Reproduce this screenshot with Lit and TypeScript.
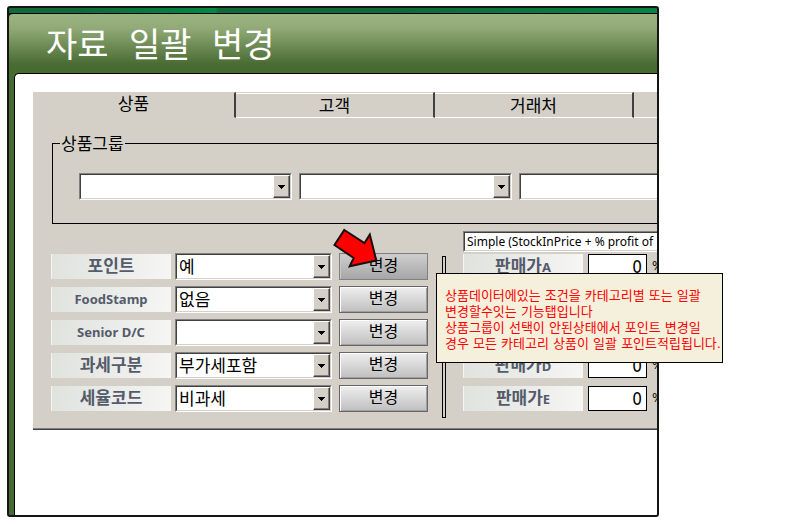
import { LitElement, html, css } from "lit";
import { customElement, property } from "lit/decorators.js";

@customElement("combo-box")
class ComboBox extends LitElement {
  @property() label = "";
  @property() value = "";
  @property({ type: Boolean }) plain = false;

  static styles = css`
    :host {
      display: grid;
      box-sizing: border-box;
      height: 27px;
      border: 1px solid;
      border-color: #808080 #fff #fff #808080;
      font-family: "DejaVu Sans Condensed", "Noto Sans CJK KR", sans-serif;
      font-size: 17px;
    }
    .field {
      display: grid;
      grid-template-columns: 1fr 17px;
      border: 1px solid;
      border-color: #404040 #d4d0c8 #d4d0c8 #404040;
      background: #fff;
      min-width: 0;
    }
    .field.plain {
      grid-template-columns: 1fr;
    }
    select {
      appearance: none;
      width: 100%;
      min-width: 0;
      height: 100%;
      margin: 0;
      padding: 0 0 0 2px;
      border: 0;
      border-radius: 0;
      outline: 0;
      background: #fff;
      color: #000;
      font: inherit;
    }
    .arrow {
      display: grid;
      place-items: center;
      box-sizing: border-box;
      border: 1px solid;
      border-color: #fff #404040 #404040 #fff;
      box-shadow: inset -1px -1px #808080;
      background: #d4d0c8;
      pointer-events: none;
    }
  `;

  render() {
    return html`
      <div class="field ${this.plain ? "plain" : ""}">
        <select aria-label=${this.label}>
          <option>${this.value}</option>
        </select>
        ${this.plain
          ? null
          : html`<span class="arrow">
              <svg width="7" height="4" viewBox="0 0 7 4" shape-rendering="crispEdges">
                <path d="M0 0H7V1H6V2H5V3H4V4H3V3H2V2H1V1H0Z" />
              </svg>
            </span>`}
      </div>
    `;
  }
}

@customElement("app-root")
class AppRoot extends LitElement {
  static styles = css`
    :host {
      display: block;
      position: relative;
      overflow: hidden;
      background: #fff;
      color: #000;
      font-family: "DejaVu Sans Condensed", "Noto Sans CJK KR", sans-serif;
      font-size: 17px;
    }
    .frame {
      margin: 6px 141px 8px 7px;
      border: 2px solid #151613;
      border-radius: 3px;
      overflow: hidden;
      background: #151613;
    }
    .strip {
      height: 5px;
      background: linear-gradient(90deg, #0f6b39 0, #0f6b39 70px, #008a43 206px, #0f6b39 210px, #0f6b39 60%, #058443 100%);
    }
    .window {
      border-top: 1px solid #000;
      border-radius: 4px 0 0 0;
      padding-left: 5px;
      background: linear-gradient(#9ab381 0, #91aa77 14px, #4a6c33 50px, #466a30 56px);
    }
    h1 {
      margin: 0;
      padding-left: 32px;
      height: 59px;
      line-height: 62px;
      color: #fff;
      font-family: "DejaVu Sans Mono", "Noto Sans CJK KR", monospace;
      font-size: 34px;
      font-weight: 400;
      white-space: nowrap;
    }
    .body {
      border: 1px solid #000;
      border-width: 1px 0 0 1px;
      border-radius: 5px 0 0 0;
      padding: 18px 0 85px 18px;
      background: #fff;
    }
    .panel {
      background: #d4d0c8;
      border-bottom: 1px solid #404040;
      box-shadow: inset 0 -1px #808080;
      padding-bottom: 11px;
      overflow: hidden;
    }
    .tabs {
      display: flex;
    }
    .tab {
      flex: none;
      box-sizing: border-box;
      width: 199px;
      height: 26px;
      padding: 2px 0 0;
      border: 0;
      border-top: 1px solid #d4d0c8;
      border-bottom: 1px solid #fff;
      border-right: 2px solid #404040;
      box-shadow: inset 0 1px #fff;
      background: #d4d0c8;
      color: #000;
      font: inherit;
      line-height: 20px;
    }
    .tab.active {
      width: 203px;
      padding: 0 0 2px;
      border-bottom-color: #d4d0c8;
      box-shadow: none;
    }
    .tab.last {
      box-shadow: none;
    }
    fieldset {
      display: flex;
      gap: 7px;
      margin: 16px -20px 0 19px;
      padding: 21px 0 23px 26px;
      border: 1px solid #000;
      min-width: 0;
    }
    legend {
      margin-left: -19px;
      padding: 0 1px;
      height: 18px;
      line-height: 21px;
    }
    .group {
      flex: none;
      width: 213px;
    }
    .settings {
      display: flex;
      align-items: flex-start;
      margin: 7px 0 0 18px;
    }
    .options,
    .prices {
      flex: none;
      display: grid;
      row-gap: 6px;
    }
    .options {
      grid-template-columns: 120px 157px 92px;
      column-gap: 4px;
      padding-top: 22px;
    }
    .change {
      box-sizing: border-box;
      width: 89px;
      height: 27px;
      margin-left: 3px;
      padding: 0 0 2px;
      border: 1px solid #66666a;
      box-shadow: inset 1px 1px #fff, inset -1px -1px #a0a0a0;
      background: linear-gradient(#efefef, #bfbfbf);
      color: #000;
      font: inherit;
      font-size: 16px;
      line-height: 22px;
    }
    .change.hot {
      border-color: #808084;
      box-shadow: inset 1px 1px #c8c8c8;
      background: linear-gradient(#cfcfcf, #a6a6a6);
    }
    .caption {
      align-self: center;
      height: 25px;
      line-height: 25px;
      text-align: center;
      white-space: nowrap;
      font-weight: 700;
      color: #555b6b;
      background: linear-gradient(100deg, #dfe2dd, #f6f6f5);
      box-shadow: inset 1px 0 #f4f5f3;
    }
    .latin {
      font-family: "Noto Sans", sans-serif;
      font-size: 13px;
    }
    .divider {
      flex: none;
      box-sizing: border-box;
      width: 4px;
      height: 162px;
      margin: 25px 17px 0 14px;
      border: 1px solid #000;
    }
    .formula {
      width: 260px;
      height: 21px;
      margin-bottom: 1px;
      font-family: "Noto Sans", sans-serif;
      font-size: 12px;
    }
    .prices {
      grid-template-columns: 120px 59px auto;
      column-gap: 5px;
    }
    .price {
      align-self: center;
      box-sizing: border-box;
      width: 59px;
      height: 25px;
      padding: 0 4px;
      border: 1px solid #000;
      border-radius: 0;
      background: #fff;
      font: inherit;
      text-align: right;
    }
    .unit {
      height: 27px;
      line-height: 25px;
      font-size: 13px;
    }
    .pointer {
      position: absolute;
      left: 332px;
      top: 226px;
    }
    .tooltip {
      position: absolute;
      left: 436px;
      top: 273px;
      box-sizing: border-box;
      width: 287px;
      height: 90px;
      padding: 14px 0 0 8px;
      border: 1px solid #000;
      background: #f5f0dc;
      color: #f00;
      font-family: "DejaVu Sans", "Noto Sans CJK KR", sans-serif;
      font-size: 13px;
      line-height: 16px;
      white-space: nowrap;
    }
  `;

  private options = [
    { name: "포인트", value: "예" },
    { name: "FoodStamp", value: "없음", latin: true },
    { name: "Senior D/C", value: "", latin: true },
    { name: "과세구분", value: "부가세포함" },
    { name: "세율코드", value: "비과세" },
  ];

  render() {
    return html`
      <main class="frame">
        <div class="strip"></div>
        <div class="window">
          <h1>자료 일괄 변경</h1>
          <div class="body">
            <section class="panel">
              <div class="tabs" role="tablist">
                <button class="tab active" role="tab" aria-selected="true">상품</button>
                <button class="tab" role="tab">고객</button>
                <button class="tab" role="tab">거래처</button>
                <button class="tab last" role="tab" aria-label="기타"></button>
              </div>
              <fieldset>
                <legend>상품그룹</legend>
                ${[1, 2, 3].map((n) => html`<combo-box class="group" label="상품그룹 ${n}"></combo-box>`)}
              </fieldset>
              <div class="settings">
                <div class="options">
                  ${this.options.map(
                    (o, i) => html`
                      <span class="caption ${o.latin ? "latin" : ""}">${o.name}</span>
                      <combo-box label=${o.name} value=${o.value}></combo-box>
                      <button class="change ${i === 0 ? "hot" : ""}">변경</button>
                    `
                  )}
                </div>
                <div class="divider"></div>
                <div>
                  <combo-box class="formula" plain label="가격 계산식" value="Simple (StockInPrice + % profit of"></combo-box>
                  <div class="prices">
                    ${["A", "B", "C", "D", "E"].map(
                      (p) => html`
                        <label class="caption" for="price-${p}">판매가<span class="latin">${p}</span></label>
                        <input class="price" id="price-${p}" value="0" />
                        <span class="unit">%</span>
                      `
                    )}
                  </div>
                </div>
              </div>
            </section>
          </div>
        </div>
      </main>
      <svg class="pointer" width="48" height="44" viewBox="332 226 48 44" aria-hidden="true">
        <path
          d="M344.3 230 364.5 243 369.8 234.5 376.3 260.5 349.7 266.3 353.7 258 334.5 245Z"
          fill="#f00"
          stroke="#1a0f0c"
          stroke-width="2"
        />
      </svg>
      <div class="tooltip" role="tooltip">
        상품데이터에있는 조건을 카테고리별 또는 일괄<br />변경할수잇는 기능탭입니다<br />상품그룹이 선택이 안된상태에서 포인트 변경일<br />경우
        모든 카테고리 상품이 일괄 포인트적립됩니다.
      </div>
    `;
  }
}
